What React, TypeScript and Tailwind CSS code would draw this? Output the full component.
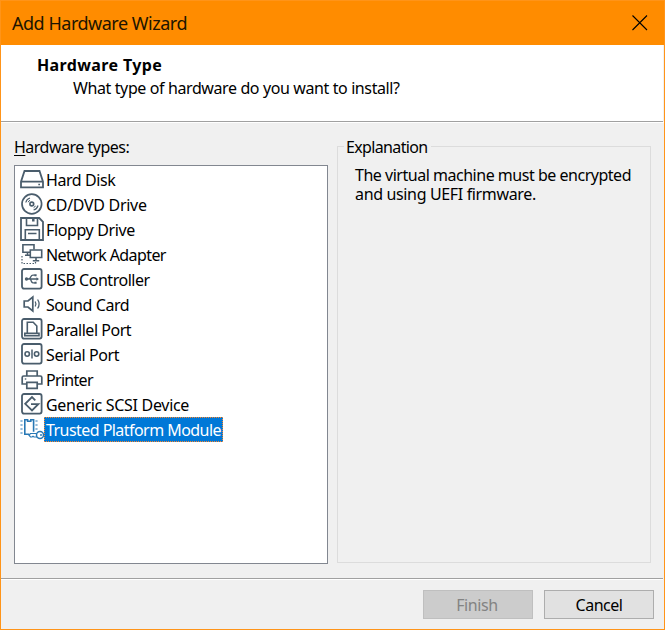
import type { ReactNode } from 'react';

const icons: Record<string, ReactNode> = {
  disk: (
    <>
      <path d="M4.5 4H19.5L23 14.7V20.3H1V14.7ZM1 14.7H23" />
      <path d="M18.3 17.6H20" strokeWidth="1.5" />
    </>
  ),
  cd: (
    <>
      <circle cx="11.8" cy="12" r="9.8" strokeWidth="1.7" />
      <circle cx="11.8" cy="12" r="1.9" strokeWidth="1.6" />
      <path d="M5.8 10.5Q6.5 7 10 6M18 13.5Q17.1 17 13.6 18" strokeWidth="1.2" />
      <path d="M8.2 10.2Q8.7 8.7 10 8.3M15.4 13.8Q14.9 15.3 13.6 15.7" strokeWidth="1" />
    </>
  ),
  floppy: (
    <>
      <path d="M1 1H19.2L23 4.8V23H1Z" />
      <path d="M6.5 1V8.5H17.5V1M5.3 23V12.8H19.3V23M8 16.5H16.5" strokeWidth="1.6" />
      <path d="M13.3 1V4.5" strokeWidth="2.5" />
    </>
  ),
  network: (
    <>
      <path d="M10 10.2H2.9V2.8H14V7.5M7.5 10.5V13M5 13.2H10" strokeWidth="1.6" />
      <path d="M10.3 8H21.7V15.5H10.3ZM16 15.5V18.5M12.8 18.7H19.2" strokeWidth="1.6" />
      <path d="M2 14V21.5H15.5V19.5" strokeDasharray="1.5 1.5" strokeWidth="1.2" />
    </>
  ),
  usb: (
    <>
      <rect x="2" y="2" width="19.6" height="19.6" rx="2" />
      <path d="M6 12H17M8.5 12Q10 12 11 9.5Q11.5 8.2 13 8.2H15M10.5 12Q11.5 15.8 13 15.8H15" strokeWidth="1.3" />
      <path d="M16.5 10.2L19 12L16.5 13.8ZM14.5 7.2H16.6V9.2H14.5ZM14.5 14.8H16.6V16.8H14.5Z" fill="currentColor" stroke="none" />
      <circle cx="6.5" cy="12" r="1.7" fill="currentColor" stroke="none" />
    </>
  ),
  sound: (
    <>
      <path d="M4.2 9V15H8L12.8 19V5L8 9Z" strokeWidth="1.7" />
      <path d="M15.2 9.5Q16.7 12 15.2 14.5M17.6 7.5Q20.6 12 17.6 16.5" strokeWidth="1.3" />
    </>
  ),
  parallel: (
    <>
      <rect x="2" y="2" width="19.6" height="19.6" rx="2" />
      <path d="M7.3 16V5.3H13.2L16.8 9V16M4.8 16.2H19V18.6H4.8Z" strokeWidth="1.6" />
    </>
  ),
  serial: (
    <>
      <rect x="2" y="2" width="19.6" height="19.6" rx="2" />
      <circle cx="7.2" cy="12" r="2.2" strokeWidth="1.6" />
      <circle cx="16.6" cy="12" r="2.2" strokeWidth="1.6" />
      <path d="M12 7.5V16.5" strokeWidth="1.5" />
    </>
  ),
  printer: (
    <>
      <path d="M6.8 8.7V4H17.2V8.7M6.8 17H2.2V10.5Q2.2 9 3.7 9H20.3Q21.8 9 21.8 10.5V17H17.2" strokeWidth="1.7" />
      <path d="M6.8 15.3H17.2V21.3H6.8Z" strokeWidth="1.7" />
      <path d="M4.8 12H6.3" strokeWidth="1.3" />
    </>
  ),
  scsi: (
    <>
      <rect x="2" y="2" width="19.6" height="19.6" rx="2" />
      <path d="M15.3 8.3L12 5L5.2 11.8L12 18.5L18.3 12.2H11" />
    </>
  ),
  tpm: (
    <>
      <path d="M9.3 17.2H4.8V2.8H7.6V4.3H10.8V2.8H13.6V14.8" strokeWidth="1.6" />
      <path d="M.4 4H2.6M.4 8H2.6M.4 12H2.6M.4 16H2.6M15.4 4H17.6M15.4 8H17.6M15.4 12H17.6" strokeWidth="1.2" />
      <path d="M16.8 16.5H10.5L9 18.2L10.5 20H12L13 19.2L14 20H17" strokeWidth="1.2" />
      <circle cx="20" cy="18" r="3.5" strokeWidth="1.5" />
      <circle cx="21" cy="18" r="1" fill="currentColor" stroke="none" />
    </>
  ),
};

const hardware = [
  { icon: 'disk', label: 'Hard Disk', tracking: 'tracking-[-0.42px]' },
  { icon: 'cd', label: 'CD/DVD Drive', tracking: 'tracking-[-0.3px]' },
  { icon: 'floppy', label: 'Floppy Drive', tracking: 'tracking-[-0.38px]' },
  { icon: 'network', label: 'Network Adapter', tracking: 'tracking-[-0.6px]' },
  { icon: 'usb', label: 'USB Controller', tracking: 'tracking-[-0.48px]' },
  { icon: 'sound', label: 'Sound Card', tracking: 'tracking-[-0.42px]' },
  { icon: 'parallel', label: 'Parallel Port', tracking: 'tracking-[-0.47px]' },
  { icon: 'serial', label: 'Serial Port', tracking: 'tracking-[-0.4px]' },
  { icon: 'printer', label: 'Printer', tracking: 'tracking-[-0.7px]' },
  { icon: 'scsi', label: 'Generic SCSI Device', tracking: 'tracking-[-0.3px]' },
  { icon: 'tpm', label: 'Trusted Platform Module', tracking: 'tracking-[-0.55px]', selected: true },
];

function Icon({ name }: { name: string }) {
  return (
    <svg
      viewBox="0 0 24 24"
      className={`size-6 shrink-0 ${name === 'tpm' ? 'text-[#2878b5]' : 'text-[#4a5d6c]'}`}
      fill="none"
      stroke="currentColor"
      strokeWidth="1.8"
    >
      {icons[name]}
    </svg>
  );
}

export default function App() {
  return (
    <div className="flex h-[630px] w-[665px] flex-col overflow-hidden border border-[#ff9419] bg-[#f0f0f0] font-['Noto_Sans',sans-serif] text-[16px] leading-[19px] tracking-[-0.3px] whitespace-nowrap text-black">
      <div className="-mx-px -mt-px flex h-[45px] shrink-0 items-center justify-between border-t border-[#ff9419] bg-[#ff8c00] pr-[17px] pb-px pl-3 text-[#201400]">
        <h1 className="pt-px text-[18px] leading-6 tracking-[-0.48px]">Add Hardware Wizard</h1>
        <svg viewBox="0 0 16 16" className="size-4" stroke="black" strokeWidth="1.1">
          <path d="M.5.5L15 15M15 .5L.5 15" />
        </svg>
      </div>

      <div className="flex h-[77px] w-[662px] shrink-0 flex-col border-b border-[#a0a0a0] bg-white pt-[9px] pl-9">
        <h2 className="leading-[22px] font-bold tracking-[0.38px]">Hardware Type</h2>
        <p className="pl-9 leading-[24px] tracking-[-0.39px]">What type of hardware do you want to install?</p>
      </div>

      <div className="flex h-[456px] shrink-0 border-t border-white pr-[13px] pl-[13px]">
        <div className="flex w-[314px] flex-col pt-[15px]">
          <div className="h-[27px] tracking-[-0.5px]">
            <span className="underline underline-offset-2">H</span>ardware types:
          </div>
          <ul className="h-[399px] border border-[#828790] bg-white pt-px pl-[5px]">
            {hardware.map((item) => (
              <li key={item.icon} className="flex h-[25px]">
                <Icon name={item.icon} />
                <span
                  className={`h-[25px] border border-dotted pl-px leading-[24px] ${item.tracking} ${
                    item.selected ? 'w-[179px] border-[#ff8728] bg-[#0078d7] text-white' : 'border-transparent'
                  }`}
                >
                  {item.label}
                </span>
              </li>
            ))}
          </ul>
        </div>

        <fieldset className="mt-[14px] ml-[9px] h-[426px] w-[314px] border border-[#dcdcdc] px-[6px]">
          <legend className="h-[19px] pr-[3px] pl-[2px] leading-[21px] tracking-[-0.64px]">Explanation</legend>
          <p className="pt-[10px] pl-[11px] tracking-[-0.48px]">
            The virtual machine must be encrypted
          </p>
          <p className="pl-[11px] tracking-[-0.35px]">and using UEFI firmware.</p>
        </fieldset>
      </div>

      <div className="flex h-[51px] w-[662px] items-start justify-end gap-[11px] border-t border-[#a0a0a0] pt-[11px] pr-[9px] shadow-[inset_0_1px_0_white]">
        <button disabled className="h-[29px] w-[110px] border border-[#bfbfbf] bg-[#cccccc] pt-px pr-[2px] tracking-[-0.4px] text-[#838383]">
          Finish
        </button>
        <button className="h-[29px] w-[110px] border border-[#adadad] bg-[#e1e1e1] pt-px tracking-[-0.5px]">Cancel</button>
      </div>
    </div>
  );
}
